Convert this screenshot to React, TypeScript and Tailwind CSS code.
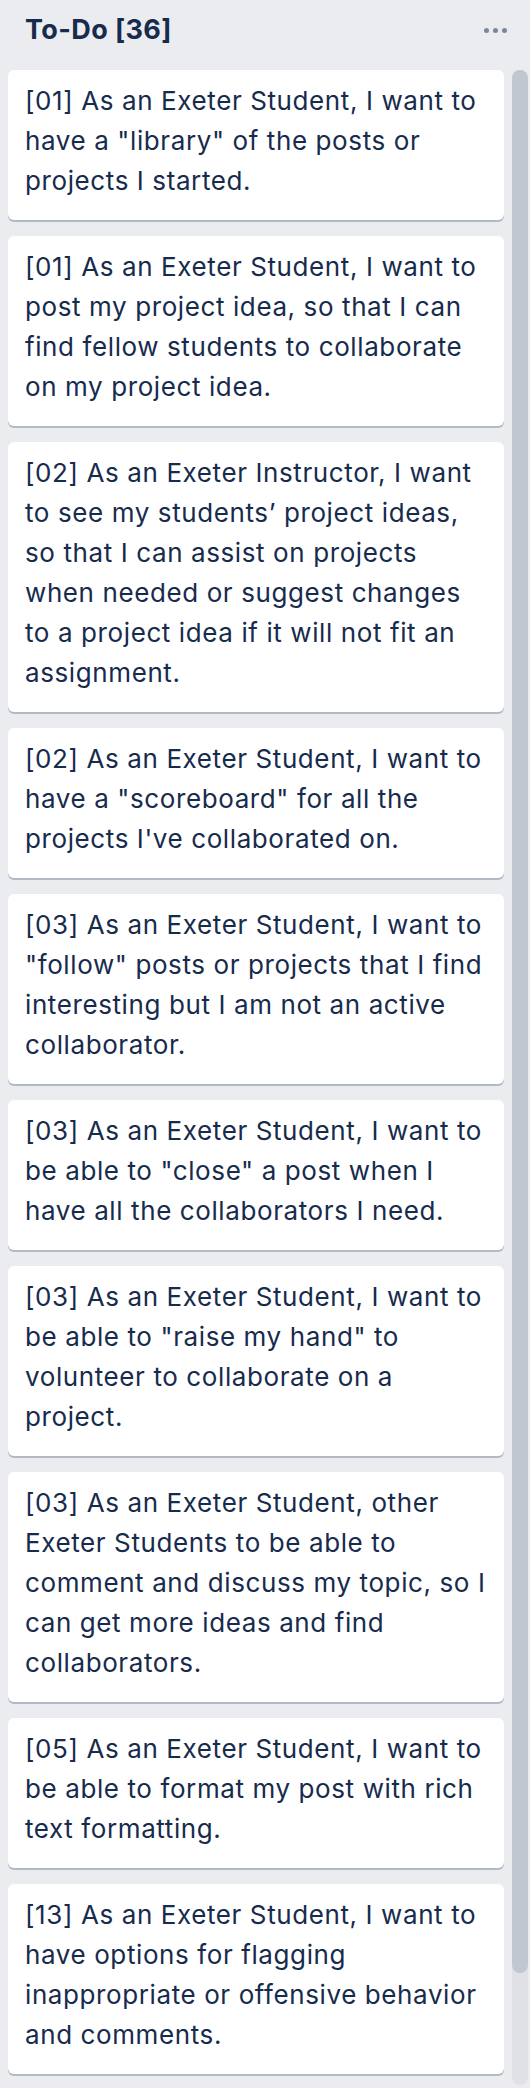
import React from 'react';

const cards: string[] = [
  '[01] As an Exeter Student, I want to have a "library" of the posts or projects I started.',
  '[01] As an Exeter Student, I want to post my project idea, so that I can find fellow students to collaborate on my project idea.',
  '[02] As an Exeter Instructor, I want to see my students\u2019 project ideas, so that I can assist on projects when needed or suggest changes to a project idea if it will not fit an assignment.',
  '[02] As an Exeter Student, I want to have a "scoreboard" for all the projects I\'ve collaborated on.',
  '[03] As an Exeter Student, I want to "follow" posts or projects that I find interesting but I am not an active collaborator.',
  '[03] As an Exeter Student, I want to be able to "close" a post when I have all the collaborators I need.',
  '[03] As an Exeter Student, I want to be able to "raise my hand" to volunteer to collaborate on a project.',
  '[03] As an Exeter Student, other Exeter Students to be able to comment and discuss my topic, so I can get more ideas and find collaborators.',
  '[05] As an Exeter Student, I want to be able to format my post with rich text formatting.',
  '[13] As an Exeter Student, I want to have options for flagging inappropriate or offensive behavior and comments.',
];

const Card: React.FC<{ text: string }> = ({ text }) => (
  <div className="bg-white rounded-[6px] shadow-[0_2px_0_#b3b9c4] pl-[17px] pr-[16px] pt-[11px] pb-[19px]">
    <p className="text-[26px] leading-[40px] tracking-[0.6px] text-[#172b4d]">{text}</p>
  </div>
);

export default function App() {
  return (
    <div
      className="w-[530px] h-[2088px] bg-[#ebecf0] overflow-hidden flex flex-col"
      style={{ fontFamily: 'Inter, "Noto Sans", sans-serif' }}
    >
      {/* Header */}
      <div className="h-[70px] shrink-0 flex items-start justify-between pl-[25px] pr-[23px] pt-[12px]">
        <h2 className="text-[27px] leading-[36px] font-bold tracking-[0.4px] text-[#172b4d]">To-Do [36]</h2>
        <div className="flex items-center gap-[4px] h-[36px]">
          <span className="w-[5px] h-[5px] rounded-full bg-[#7a869a]"></span>
          <span className="w-[5px] h-[5px] rounded-full bg-[#7a869a]"></span>
          <span className="w-[5px] h-[5px] rounded-full bg-[#7a869a]"></span>
        </div>
      </div>

      <div className="flex flex-1 min-h-0">
        {/* Cards */}
        <div className="flex-1 flex flex-col gap-4 pl-2">
          {cards.map((c, i) => (
            <Card key={i} text={c} />
          ))}
        </div>

        {/* Scrollbar */}
        <div className="w-4 ml-2 mr-[2px] h-[2015px] rounded-full bg-[#dfe1e6] flex flex-col">
          <div className="h-[1903px] rounded-full bg-[#c1c7d0]"></div>
        </div>
      </div>
    </div>
  );
}
